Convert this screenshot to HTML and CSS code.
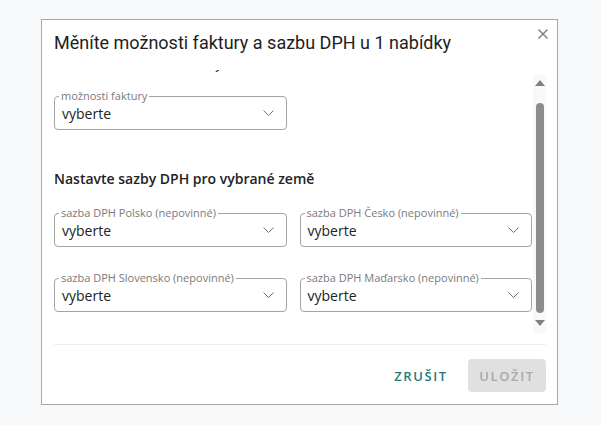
FILE: index.html
```html
<!DOCTYPE html>
<html lang="cs">
<head>
<meta charset="utf-8">
<title>Dialog</title>
<link rel="stylesheet" href="styles.css">
</head>
<body>
<div class="dialog">
  <div class="header">
    <h1 class="title">Měníte možnosti faktury a sazbu DPH u 1 nabídky</h1>
    <button class="close" aria-label="zavřít">
      <svg width="10" height="10" viewBox="0 0 10 10"><path d="M0.5 0.5 L9.5 9.5 M9.5 0.5 L0.5 9.5" stroke="#7a7a7a" stroke-width="1.4" fill="none"/></svg>
    </button>
  </div>
  <div class="body">
    <div class="content">
      <div class="clipped"><span class="mark">´</span></div>
      <div class="field field-single">
        <span class="label">možnosti faktury</span>
        <span class="value">vyberte</span>
        <svg class="chev" width="11" height="6" viewBox="0 0 11 6"><path d="M0.5 0.5 L5.5 5.5 L10.5 0.5" stroke="#707070" stroke-width="1" fill="none"/></svg>
      </div>
      <h2 class="section">Nastavte sazby DPH pro vybrané země</h2>
      <div class="grid">
        <div class="field">
          <span class="label">sazba DPH Polsko (nepovinné)</span>
          <span class="value">vyberte</span>
          <svg class="chev" width="11" height="6" viewBox="0 0 11 6"><path d="M0.5 0.5 L5.5 5.5 L10.5 0.5" stroke="#707070" stroke-width="1" fill="none"/></svg>
        </div>
        <div class="field">
          <span class="label">sazba DPH Česko (nepovinné)</span>
          <span class="value">vyberte</span>
          <svg class="chev" width="11" height="6" viewBox="0 0 11 6"><path d="M0.5 0.5 L5.5 5.5 L10.5 0.5" stroke="#707070" stroke-width="1" fill="none"/></svg>
        </div>
        <div class="field">
          <span class="label">sazba DPH Slovensko (nepovinné)</span>
          <span class="value">vyberte</span>
          <svg class="chev" width="11" height="6" viewBox="0 0 11 6"><path d="M0.5 0.5 L5.5 5.5 L10.5 0.5" stroke="#707070" stroke-width="1" fill="none"/></svg>
        </div>
        <div class="field">
          <span class="label">sazba DPH Maďarsko (nepovinné)</span>
          <span class="value">vyberte</span>
          <svg class="chev" width="11" height="6" viewBox="0 0 11 6"><path d="M0.5 0.5 L5.5 5.5 L10.5 0.5" stroke="#707070" stroke-width="1" fill="none"/></svg>
        </div>
      </div>
    </div>
    <div class="scrollbar">
      <div class="arrow arrow-up"></div>
      <div class="thumb"></div>
      <div class="arrow arrow-down"></div>
    </div>
  </div>
  <div class="footer">
    <button class="btn btn-text">ZRUŠIT</button>
    <button class="btn btn-disabled">ULOŽIT</button>
  </div>
</div>
</body>
</html>
```

FILE: styles.css
```css
* { box-sizing: border-box; }
html, body { margin: 0; }
body {
  background: #f7f8fa;
  padding: 19px 0 0 41px;
  font-family: "Open Sans", "Liberation Sans", sans-serif;
  color: #222;
}
.dialog {
  width: 517px;
  height: 386px;
  background: #fff;
  border: 1px solid #a8a8a8;
  display: flex;
  flex-direction: column;
}
.header {
  height: 46px;
  padding: 11px 12px 0 12px;
  position: relative;
}
.title {
  margin: 0;
  font-family: Roboto, "Liberation Sans", sans-serif;
  font-weight: 400;
  font-size: 18px;
  line-height: 24px;
  color: #1e1e1e;
}
.close {
  position: absolute;
  top: 9px;
  right: 9px;
  width: 10px;
  height: 10px;
  padding: 0;
  border: 0;
  background: none;
  display: flex;
}
.body {
  height: 278px;
  display: flex;
  padding: 0 11px 0 12px;
}
.content {
  width: 478px;
  overflow: hidden;
}
.clipped {
  height: 20px;
  padding-left: 161px;
  font-size: 13px;
  line-height: 18px;
  color: #333;
}
.mark {
  display: inline-block;
  font-weight: 700;
}
.field {
  position: relative;
  height: 34px;
  border: 1px solid #a3a3a3;
  border-radius: 4px;
  display: flex;
  align-items: center;
  padding: 0 12px 0 7px;
}
.field-single {
  width: 233px;
  margin-top: 10px;
}
.label {
  position: absolute;
  top: -8px;
  left: 4px;
  padding: 0 2px;
  background: #fff;
  font-size: 11px;
  line-height: 14px;
  color: #7a7a7a;
}
.value {
  flex: 1;
  font-size: 14px;
  line-height: 20px;
  color: #222;
  padding-top: 2px;
}
.chev { flex: none; }
.section {
  margin: 39px 0 0 0;
  font-size: 14px;
  line-height: 20px;
  font-weight: 600;
  color: #222;
}
.grid {
  margin-top: 23px;
  display: grid;
  grid-template-columns: 1fr 1fr;
  column-gap: 13px;
  row-gap: 31px;
  padding-top: 1px;
}
.scrollbar {
  width: 13px;
  margin-left: 1px;
  margin-top: 9px;
  height: 258px;
  background: #f8f8f8;
  display: flex;
  flex-direction: column;
  align-items: center;
}
.arrow {
  width: 0;
  height: 0;
  border-left: 5px solid transparent;
  border-right: 5px solid transparent;
}
.arrow-up {
  margin-top: 5px;
  border-bottom: 6px solid #808080;
}
.arrow-down {
  margin-top: 7px;
  border-top: 6px solid #808080;
}
.thumb {
  margin-top: 17px;
  width: 8px;
  height: 210px;
  border-radius: 4px;
  background: #8c8c8c;
}
.footer {
  margin: 0 11px 0 12px;
  border-top: 1px solid #eeeeee;
  padding: 14px 0 0 0;
  display: flex;
  justify-content: flex-end;
  gap: 8px;
}
.btn {
  height: 33px;
  width: 78px;
  border: 0;
  border-radius: 4px;
  font-family: "Open Sans", "Liberation Sans", sans-serif;
  font-size: 13px;
  font-weight: 600;
  letter-spacing: 1.6px;
  padding: 0;
  background: none;
}
.btn-text { color: #1d7d78; }
.btn-disabled {
  background: #e0e0e0;
  color: #a9a9a9;
}
```
